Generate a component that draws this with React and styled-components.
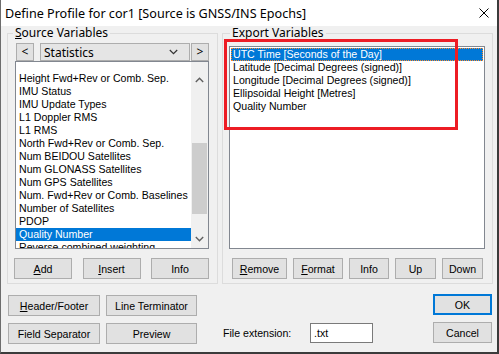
import React from 'react';
import styled, { createGlobalStyle } from 'styled-components';

const sans = `"Liberation Sans", Arial, sans-serif`;
const segoe = `"Noto Sans", "Open Sans", sans-serif`;

const GlobalStyle = createGlobalStyle`
  html, body { margin: 0; padding: 0; background: #fff; }
  * { box-sizing: border-box; }
`;

const Window = styled.div`
  width: 499px;
  height: 354px;
  background: #f0f0f0;
  border-left: 1px solid #6d6d6d;
  border-right: 2px solid #3b3b3b;
  border-bottom: 2px solid #3b3b3b;
  display: flex;
  flex-direction: column;
  font-family: ${sans};
  font-size: 10.6px;
  color: #000;
  overflow: hidden;
`;

const TitleBar = styled.div`
  height: 26px;
  flex-shrink: 0;
  background: #fff;
  display: flex;
  align-items: center;
  padding-left: 4px;
  font-family: ${segoe};
  font-size: 12.6px;
  svg { margin-left: auto; margin-right: 8px; }
`;

const Body = styled.div`
  position: relative;
  flex: 1;
  padding: 7px 0 0 6px;
`;

const GroupsRow = styled.div`
  display: flex;
  gap: 4px;
  height: 251px;
`;

const Group = styled.div`
  width: ${({ $w }) => $w}px;
  height: 100%;
  border: 1px solid #dcdcdc;
  display: flex;
  flex-direction: column;
  align-items: flex-start;
`;

const GroupLabel = styled.div`
  margin: -8px 0 0 ${({ $offset }) => $offset}px;
  padding: 0 2px;
  height: 14px;
  line-height: 14px;
  background: #f0f0f0;
  font-family: ${segoe};
  font-size: 12px;
`;

const U = styled.span`
  text-decoration: underline;
  text-underline-offset: 1px;
`;

const NavRow = styled.div`
  display: flex;
  margin: 3px 0 0 8px;
  height: 18px;
`;

const NavButton = styled.button`
  width: 18px;
  height: 18px;
  padding: 0;
  border: 1px solid #adadad;
  background: #e1e1e1;
  font-family: ${segoe};
  font-size: 12px;
  line-height: 14px;
  color: #000;
  margin-left: ${({ $ml }) => $ml || 0}px;
`;

const Combo = styled.div`
  width: 150px;
  height: 18px;
  margin-left: 6px;
  border: 1px solid #adadad;
  background: #e5e5e5;
  display: flex;
  align-items: center;
  padding: 0 11px 0 3px;
  font-family: ${segoe};
  font-size: 12px;
  svg { margin-left: auto; }
`;

const ListBox = styled.div`
  width: ${({ $w }) => $w}px;
  height: ${({ $h }) => $h}px;
  margin: ${({ $m }) => $m};
  background: #fff;
  border: 1px solid #828790;
  display: flex;
  overflow: hidden;
`;

const Rows = styled.div`
  flex: 1;
  min-width: 0;
  display: flex;
  flex-direction: column;
  padding: ${({ $pad }) => $pad};
  overflow: hidden;
`;

const Row = styled.div`
  flex-shrink: 0;
  height: 13px;
  line-height: 13px;
  padding-left: ${({ $indent }) => $indent}px;
  white-space: nowrap;
  overflow: hidden;
  background: ${({ $selected }) => ($selected ? '#0078d7' : 'transparent')};
  color: ${({ $selected }) => ($selected ? '#fff' : '#000')};
  outline: ${({ $focus }) => ($focus ? '1px dotted #ff8b2b' : 'none')};
  outline-offset: -1px;
`;

const ScrollBar = styled.div`
  width: 17px;
  flex-shrink: 0;
  background: #f0f0f0;
  display: flex;
  flex-direction: column;
  align-items: center;
`;

const Arrow = styled.div`
  height: 17px;
  width: 17px;
  display: flex;
  align-items: center;
  justify-content: center;
  margin-top: ${({ $mt }) => $mt}px;
`;

const Thumb = styled.div`
  width: 15px;
  height: 71px;
  background: #cdcdcd;
  margin-top: ${({ $mt }) => $mt}px;
`;

const ButtonRow = styled.div`
  display: flex;
  justify-content: ${({ $spread }) => ($spread ? 'space-between' : 'flex-start')};
  gap: ${({ $gap }) => $gap || 0}px;
  width: ${({ $w }) => ($w ? `${$w}px` : 'auto')};
  margin: 9px 0 0 ${({ $ml }) => $ml}px;
`;

const Button = styled.button`
  width: ${({ $w }) => $w}px;
  height: 21px;
  padding: 0;
  border: ${({ $primary }) => ($primary ? '2px solid #0078d7' : '1px solid #adadad')};
  background: #e1e1e1;
  font-family: ${sans};
  font-size: 10.6px;
  color: #000;
  white-space: nowrap;
`;

const BottomRow = styled.div`
  display: flex;
  align-items: flex-start;
  margin-top: 10px;
`;

const ButtonGrid = styled.div`
  display: grid;
  grid-template-columns: 92px 91px;
  grid-template-rows: 21px 21px;
  column-gap: 6px;
  row-gap: 7px;
  margin: 1px 0 0 1px;
  button { width: 100%; }
`;

const ExtField = styled.div`
  display: flex;
  align-items: center;
  margin: 29px 0 0 26px;
`;

const ExtLabel = styled.span`
  width: 87px;
`;

const ExtInput = styled.div`
  width: 63px;
  height: 20px;
  border: 1px solid #7a7a7a;
  background: #fff;
  padding-left: 3px;
  line-height: 18px;
`;

const DialogButtons = styled.div`
  margin: 0 5px 0 auto;
  display: flex;
  flex-direction: column;
  gap: 7px;
`;

const Annotation = styled.div`
  position: absolute;
  left: 223px;
  top: 13px;
  width: 234px;
  height: 91px;
  border: 3px solid #ed1c24;
  pointer-events: none;
`;

const sourceItems = [
  'Height Fwd+Rev or Comb. Sep.',
  'IMU Status',
  'IMU Update Types',
  'L1 Doppler RMS',
  'L1 RMS',
  'North Fwd+Rev or Comb. Sep.',
  'Num BEIDOU Satellites',
  'Num GLONASS Satellites',
  'Num GPS Satellites',
  'Num. Fwd+Rev or Comb. Baselines',
  'Number of Satellites',
  'PDOP',
  'Quality Number',
  'Reverse combined weighting',
];

const exportItems = [
  'UTC Time [Seconds of the Day]',
  'Latitude [Decimal Degrees (signed)]',
  'Longitude [Decimal Degrees (signed)]',
  'Ellipsoidal Height [Metres]',
  'Quality Number',
];

const Chevron = ({ up }) => (
  <svg width="9" height="6" viewBox="0 0 9 6">
    <path
      d={up ? 'M0.8 5 L4.5 1.3 L8.2 5' : 'M0.8 1 L4.5 4.7 L8.2 1'}
      fill="none"
      stroke="#606060"
      strokeWidth="1.4"
    />
  </svg>
);

const App = () => {
  return (
    <>
      <GlobalStyle />
      <Window>
        <TitleBar>
          Define Profile for cor1 [Source is GNSS/INS Epochs]
          <svg width="10" height="10" viewBox="0 0 10 10">
            <path d="M0.5 0.5 L9.5 9.5 M9.5 0.5 L0.5 9.5" stroke="#000" strokeWidth="1" />
          </svg>
        </TitleBar>
        <Body>
          <GroupsRow>
            <Group $w={211}>
              <GroupLabel $offset={5}>
                <U>S</U>ource Variables
              </GroupLabel>
              <NavRow>
                <NavButton>&lt;</NavButton>
                <Combo>
                  Statistics
                  <svg width="9" height="6" viewBox="0 0 9 6">
                    <path d="M0.8 1 L4.5 4.7 L8.2 1" fill="none" stroke="#333" strokeWidth="1.2" />
                  </svg>
                </Combo>
                <NavButton $ml={1}>&gt;</NavButton>
              </NavRow>
              <ListBox $w={194} $h={188} $m="0 0 0 7px">
                <Rows $pad="10px 0 0 0">
                  {sourceItems.map((item) => (
                    <Row key={item} $indent={3} $selected={item === 'Quality Number'}>
                      {item}
                    </Row>
                  ))}
                </Rows>
                <ScrollBar>
                  <Arrow $mt={9}>
                    <Chevron up />
                  </Arrow>
                  <Thumb $mt={55} />
                  <Arrow $mt={16}>
                    <Chevron />
                  </Arrow>
                </ScrollBar>
              </ListBox>
              <ButtonRow $spread $w={195} $ml={6}>
                <Button $w={58}>
                  <U>A</U>dd
                </Button>
                <Button $w={58}>
                  <U>I</U>nsert
                </Button>
                <Button $w={58}>Info</Button>
              </ButtonRow>
            </Group>
            <Group $w={271}>
              <GroupLabel $offset={7}>Export Variables</GroupLabel>
              <ListBox $w={256} $h={203} $m="6px 0 0 6px">
                <Rows $pad="1px">
                  {exportItems.map((item, i) => (
                    <Row key={item} $indent={2} $selected={i === 0} $focus={i === 0}>
                      {item}
                    </Row>
                  ))}
                </Rows>
              </ListBox>
              <ButtonRow $gap={6} $ml={9}>
                <Button $w={55}>
                  <U>R</U>emove
                </Button>
                <Button $w={50}>
                  <U>F</U>ormat
                </Button>
                <Button $w={40}>Info</Button>
                <Button $w={41}>Up</Button>
                <Button $w={41}>Down</Button>
              </ButtonRow>
            </Group>
          </GroupsRow>
          <BottomRow>
            <ButtonGrid>
              <Button>
                <U>H</U>eader/Footer
              </Button>
              <Button>Line Terminator</Button>
              <Button>Field Separator</Button>
              <Button>Preview</Button>
            </ButtonGrid>
            <ExtField>
              <ExtLabel>File extension:</ExtLabel>
              <ExtInput>.txt</ExtInput>
            </ExtField>
            <DialogButtons>
              <Button $w={59} $primary>
                OK
              </Button>
              <Button $w={59}>Cancel</Button>
            </DialogButtons>
          </BottomRow>
          <Annotation />
        </Body>
      </Window>
    </>
  );
};

export default App;
